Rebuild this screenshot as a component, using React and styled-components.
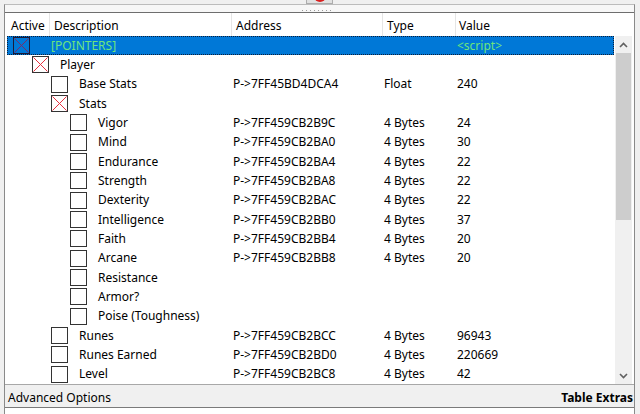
import React from "react";
import styled, { createGlobalStyle } from "styled-components";

const GlobalStyle = createGlobalStyle`
  html, body {
    margin: 0;
    padding: 0;
    background: #f0f0f0;
  }
  body {
    font-family: "Noto Sans", "Open Sans", "DejaVu Sans", sans-serif;
    font-size: 12px;
    color: #000;
  }
`;

const Window = styled.div`
  width: 640px;
  height: 414px;
  background: #f0f0f0;
  display: flex;
  flex-direction: column;
  overflow: hidden;
`;

const TopStrip = styled.div`
  height: 4px;
  display: flex;
  justify-content: center;
  align-items: flex-end;
  overflow: hidden;
`;

const TopButton = styled.div`
  width: 25px;
  height: 4px;
  margin-left: -1px;
  border: 1px solid #adadad;
  border-top: none;
  background: #e1e1e1;
  display: flex;
  justify-content: center;
  overflow: hidden;
`;

const RedDot = styled.div`
  width: 12px;
  height: 12px;
  margin-top: -9px;
  border-radius: 50%;
  background: #d9201f;
`;

const Frame = styled.div`
  margin-left: 4px;
  width: 631px;
  flex: 1;
  display: flex;
  flex-direction: column;
  box-sizing: border-box;
  border-top: 1px solid #bcbcbc;
  border-left: 1px solid #8a8a8a;
  border-right: 1px solid #8a8a8a;
`;

const Splitter = styled.div`
  height: 7px;
  background: #f7f7f7;
  display: flex;
  justify-content: center;
  align-items: flex-end;
  padding-bottom: 1px;
  box-sizing: border-box;
`;

const Grip = styled.div`
  width: 30px;
  height: 1px;
  margin-left: -6px;
  background: repeating-linear-gradient(to right, #9a9a9a 0 1px, transparent 1px 4px);
`;

const Panel = styled.div`
  flex: 1;
  display: flex;
  flex-direction: column;
  background: #fff;
  border-top: 1px solid #6e6e6e;
`;

const Header = styled.div`
  height: 23px;
  display: grid;
  grid-template-columns: 45px 182px 151px 73px 1fr;
`;

const HeadCell = styled.div`
  display: flex;
  align-items: center;
  padding-left: ${(p) => p.$pad}px;
  padding-top: 2px;
  border-right: 1px solid ${(p) => (p.$last ? "transparent" : "#e5e5e5")};
  white-space: nowrap;
  box-sizing: border-box;
`;

const Body = styled.div`
  height: 348px;
  display: flex;
`;

const List = styled.div`
  flex: 1;
  display: flex;
  flex-direction: column;
`;

const Row = styled.div`
  height: 19.333px;
  margin: 0 1px 0 2px;
  display: grid;
  grid-template-columns: 225px 151px 73px 1fr;
  align-items: center;
  white-space: nowrap;
  box-sizing: border-box;
  background: ${(p) => (p.$selected ? "#0078d7" : "transparent")};
  color: ${(p) => (p.$selected ? "#6ee47c" : "#000")};
  outline: ${(p) => (p.$selected ? "1px dotted #0d1f3a" : "none")};
  outline-offset: -1px;
`;

const DescCell = styled.div`
  display: flex;
  align-items: center;
  padding-left: ${(p) => 6 + p.$level * 19}px;
`;

const Label = styled.span`
  margin-left: ${(p) => (p.$wide ? 21 : 11)}px;
  line-height: 1;
`;

const Cell = styled.span`
  padding-left: 1px;
  line-height: 1;
`;

const Box = styled.div`
  width: 17px;
  height: 17px;
  box-sizing: border-box;
  border: 1px solid ${(p) => (p.$dark ? "#1b1b3a" : "#333")};
  background: ${(p) => (p.$dark ? "transparent" : "#fff")};
  flex-shrink: 0;
  svg {
    display: block;
  }
`;

const ScrollBar = styled.div`
  width: 17px;
  margin-right: 2px;
  background: #f0f0f0;
  display: flex;
  flex-direction: column;
`;

const Arrow = styled.div`
  height: 17px;
  display: flex;
  align-items: center;
  justify-content: center;
`;

const Thumb = styled.div`
  height: 167px;
  margin: 0 1px;
  background: #cdcdcd;
`;

const Track = styled.div`
  flex: 1;
`;

const Footer = styled.div`
  height: 24px;
  display: flex;
  align-items: center;
  justify-content: space-between;
  background: #f0f0f0;
  border-top: 1px solid #a8a8a8;
  border-bottom: 1px solid #7a7a7a;
  box-sizing: border-box;
  padding: 2px 1px 0 3px;
`;

const FooterText = styled.span`
  font-weight: ${(p) => (p.$bold ? 700 : 400)};
`;

const rows = [
  { level: 0, label: "[POINTERS]", checked: true, selected: true, value: "<script>" },
  { level: 1, label: "Player", checked: true },
  { level: 2, label: "Base Stats", address: "P->7FF45BD4DCA4", type: "Float", value: "240" },
  { level: 2, label: "Stats", checked: true },
  { level: 3, label: "Vigor", address: "P->7FF459CB2B9C", type: "4 Bytes", value: "24" },
  { level: 3, label: "Mind", address: "P->7FF459CB2BA0", type: "4 Bytes", value: "30" },
  { level: 3, label: "Endurance", address: "P->7FF459CB2BA4", type: "4 Bytes", value: "22" },
  { level: 3, label: "Strength", address: "P->7FF459CB2BA8", type: "4 Bytes", value: "22" },
  { level: 3, label: "Dexterity", address: "P->7FF459CB2BAC", type: "4 Bytes", value: "22" },
  { level: 3, label: "Intelligence", address: "P->7FF459CB2BB0", type: "4 Bytes", value: "37" },
  { level: 3, label: "Faith", address: "P->7FF459CB2BB4", type: "4 Bytes", value: "20" },
  { level: 3, label: "Arcane", address: "P->7FF459CB2BB8", type: "4 Bytes", value: "20" },
  { level: 3, label: "Resistance" },
  { level: 3, label: "Armor?" },
  { level: 3, label: "Poise (Toughness)" },
  { level: 2, label: "Runes", address: "P->7FF459CB2BCC", type: "4 Bytes", value: "96943" },
  { level: 2, label: "Runes Earned", address: "P->7FF459CB2BD0", type: "4 Bytes", value: "220669" },
  { level: 2, label: "Level", address: "P->7FF459CB2BC8", type: "4 Bytes", value: "42" },
];

const CheckBox = ({ checked, dark }) => (
  <Box $dark={dark}>
    {checked && (
      <svg width="15" height="15" viewBox="0 0 15 15">
        <path d="M0.5 0.5 L14.5 14.5 M14.5 0.5 L0.5 14.5" stroke={dark ? "#7a2a6a" : "#e8303f"} strokeWidth="1" />
      </svg>
    )}
  </Box>
);

const Chevron = ({ up }) => (
  <svg width="9" height="6" viewBox="0 0 9 6">
    <path d={up ? "M1 5 L4.5 1.5 L8 5" : "M1 1 L4.5 4.5 L8 1"} fill="none" stroke="#606060" strokeWidth="1.6" />
  </svg>
);

export default function App() {
  return (
    <Window>
      <GlobalStyle />
      <TopStrip>
        <TopButton>
          <RedDot />
        </TopButton>
      </TopStrip>
      <Frame>
        <Splitter>
          <Grip />
        </Splitter>
        <Panel>
          <Header>
            <HeadCell $pad={6}>Active</HeadCell>
            <HeadCell $pad={4}>Description</HeadCell>
            <HeadCell $pad={4}>Address</HeadCell>
            <HeadCell $pad={4}>Type</HeadCell>
            <HeadCell $pad={3} $last>Value</HeadCell>
          </Header>
          <Body>
            <List>
              {rows.map((r, i) => (
                <Row key={i} $selected={r.selected}>
                  <DescCell $level={r.level}>
                    <CheckBox checked={r.checked} dark={r.selected} />
                    <Label $wide={r.level === 0}>{r.label}</Label>
                  </DescCell>
                  <Cell>{r.address}</Cell>
                  <Cell>{r.type}</Cell>
                  <Cell>{r.value}</Cell>
                </Row>
              ))}
            </List>
            <ScrollBar>
              <Arrow>
                <Chevron up />
              </Arrow>
              <Thumb />
              <Track />
              <Arrow>
                <Chevron />
              </Arrow>
            </ScrollBar>
          </Body>
          <Footer>
            <FooterText>Advanced Options</FooterText>
            <FooterText $bold>Table Extras</FooterText>
          </Footer>
        </Panel>
      </Frame>
    </Window>
  );
}
